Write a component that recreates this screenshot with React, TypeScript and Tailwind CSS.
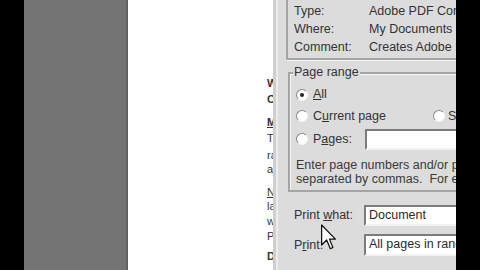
import React from 'react';

const font = { fontFamily: '"Liberation Sans", Arial, sans-serif' };

const Radio: React.FC<{ checked?: boolean }> = ({ checked }) => (
  <span className="relative inline-block w-[12px] h-[12px] rounded-full bg-white border border-[#8a8a8a] border-r-[#f4f4f4] border-b-[#f4f4f4] shrink-0">
    {checked && <span className="absolute left-[3px] top-[3px] w-[4px] h-[4px] rounded-full bg-[#222]" />}
  </span>
);

const Field: React.FC<{ text?: string; className?: string }> = ({ text, className }) => (
  <div className={`shrink-0 bg-white border-2 border-[#7c7c7c] border-r-[#f2f2f2] border-b-[#f2f2f2] pl-[3px] text-[12.5px] leading-[17px] text-[#2a2a2a] whitespace-nowrap overflow-hidden ${className ?? ''}`}>
    {text}
  </div>
);

const docLines: { t: string; y: number; cls?: string }[] = [
  { t: 'Wh', y: 77, cls: 'font-bold' },
  { t: 'Op', y: 93, cls: 'font-bold' },
  { t: 'Ma', y: 116, cls: 'font-bold text-[#5a1010] underline' },
  { t: 'Th', y: 132 },
  { t: 'ra', y: 149 },
  { t: 'a', y: 163 },
  { t: 'No', y: 186, cls: 'underline' },
  { t: 'la', y: 200 },
  { t: 'wi', y: 215 },
  { t: 'Pr', y: 230 },
  { t: 'Do', y: 250, cls: 'font-bold' },
];

export default function App() {
  return (
    <div className="w-[480px] h-[270px] overflow-hidden flex bg-black" style={font}>
      <div className="w-[24px] shrink-0 bg-black" />
      <div className="w-[104px] shrink-0 bg-[#737373] border-r-2 border-[#5f5f5f]" />
      {/* document page */}
      <div className="relative w-[145px] shrink-0 bg-white overflow-hidden">
        {docLines.map((l) => (
          <div
            key={l.y}
            className={`absolute left-[139px] text-[11px] leading-[12px] text-[#333] whitespace-nowrap ${l.cls ?? ''}`}
            style={{ top: l.y }}
          >
            {l.t}
          </div>
        ))}
      </div>
      {/* print dialog */}
      <div className="w-[5px] shrink-0 bg-[#cfcfcf] border-r-2 border-[#ececec]" />
      <div className="relative w-[178px] shrink-0 bg-[#dcdcdc] text-[12.5px] text-[#333] overflow-hidden whitespace-nowrap">
        <div className="ml-[8px] w-[200px] h-[60px] border-b-2 border-l-2 border-[#a5a5a5] shadow-[0_1px_0_#f6f6f6] pt-[2px] pl-[6px]">
          {[
            ['Type:', 'Adobe PDF Converter'],
            ['Where:', 'My Documents'],
            ['Comment:', 'Creates Adobe PDF'],
          ].map(([k, v]) => (
            <div key={k} className="flex h-[18px] items-center">
              <span className="w-[75px] shrink-0">{k}</span>
              <span>{v}</span>
            </div>
          ))}
        </div>

        <div className="relative ml-[10px] mt-[12px] w-[200px] h-[120px] border-2 border-[#a5a5a5] border-r-0 shadow-[inset_1px_1px_0_#f6f6f6]">
          <span className="absolute -top-[9px] left-[3px] bg-[#dcdcdc] px-[1px] leading-[15px]">Page range</span>
          <div className="pl-[6px] pt-[10px]">
            <div className="flex items-center h-[21px] gap-[5px]">
              <Radio checked />
              <span><span className="underline">A</span>ll</span>
            </div>
            <div className="flex items-center h-[22px] gap-[5px]">
              <Radio />
              <span className="shrink-0">C<span className="underline">u</span>rrent page</span>
              <span className="ml-[42px] flex items-center gap-[3px] shrink-0"><Radio /><span>Selection</span></span>
            </div>
            <div className="flex items-center h-[24px] gap-[5px]">
              <Radio />
              <span className="w-[47px] shrink-0">P<span className="underline">a</span>ges:</span>
              <Field className="w-[120px] h-[21px]" />
            </div>
            <div className="mt-[7px] leading-[14px] text-[#3a3a3a]">
              <div>Enter page numbers and/or page ranges</div>
              <div>separated by commas.&nbsp; For example, 1,3,5–12</div>
            </div>
          </div>
        </div>

        <div className="pl-[16px] mt-[13px]">
          <div className="flex items-center h-[21px]">
            <span className="w-[70px] shrink-0">Print <span className="underline">w</span>hat:</span>
            <Field className="w-[120px] h-[21px]" text="Document" />
          </div>
          <div className="flex items-center h-[22px] mt-[8px]">
            <span className="w-[70px] shrink-0">P<span className="underline">r</span>int:</span>
            <Field className="w-[120px] h-[22px]" text="All pages in range" />
          </div>
        </div>

        {/* mouse cursor */}
        <svg className="absolute left-[43px] top-[224px]" width="15" height="27" viewBox="0 0 12 21">
          <path d="M0.5 0.5 L0.5 16.5 L4.5 12.5 L7.5 19.5 L9.5 18.5 L6.8 11.8 L11.5 11.8 Z" fill="#fff" stroke="#111" strokeWidth="1" strokeLinejoin="round" />
        </svg>
      </div>
      <div className="flex-1 bg-black" />
    </div>
  );
}
